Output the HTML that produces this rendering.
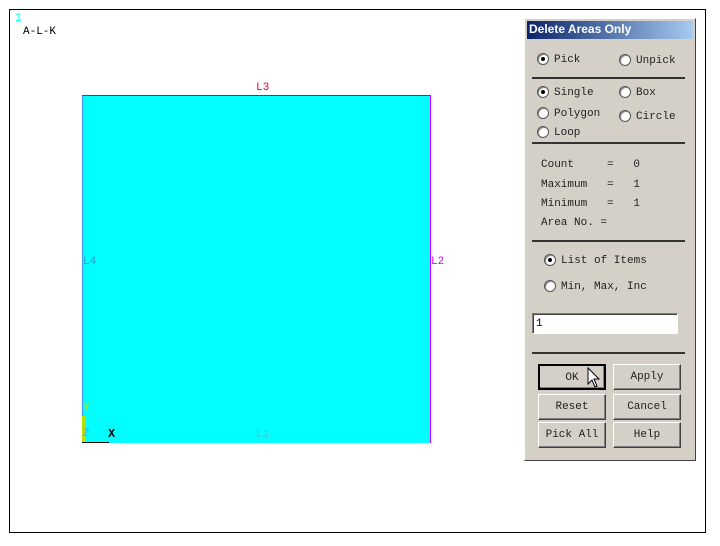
<!DOCTYPE html>
<html><head><style>
body{margin:0;width:720px;height:546px;background:#fff;position:relative;overflow:hidden;font-family:"Liberation Mono",monospace;}
.a{position:absolute;}
.t{font-size:11px;color:#222;}
.r{position:absolute;width:10px;height:10px;border-radius:50%;background:#fff;border:1px solid #555;box-shadow:inset 1px 1px 0 #888;}
.r.on::after{content:"";position:absolute;left:3px;top:3px;width:4px;height:4px;border-radius:50%;background:#000;}
.sep{position:absolute;left:532px;width:153px;height:2px;background:#333;}
.btn{position:absolute;width:68px;height:26px;background:#d4d0c8;border:1px solid;border-color:#fff #404040 #404040 #fff;box-shadow:inset -1px -1px 0 #808080;font-size:11px;text-align:center;line-height:24px;color:#222;box-sizing:border-box;}
</style></head><body>
<div class="a" style="left:9px;top:9px;width:697px;height:524px;border:1px solid #000;box-sizing:border-box"></div>
<div class="a" style="left:15px;top:11px;color:#0ff;font-size:12px">1</div>
<div class="a t" style="left:23px;top:26px;color:#000">A-L-K</div>
<div class="a" style="left:82px;top:96px;width:348px;height:347px;background:#0ff"></div>
<div class="a" style="left:82px;top:95px;width:349px;height:1px;background:#f00"></div>
<div class="a" style="left:430px;top:96px;width:1px;height:347px;background:#c0f"></div>
<div class="a" style="left:82px;top:96px;width:1px;height:347px;background:#39f"></div>
<div class="a" style="left:82px;top:416px;width:3px;height:27px;background:#bd0"></div>
<div class="a" style="left:82px;top:442px;width:27px;height:1px;background:#000"></div>
<div class="a t" style="left:256px;top:82px;color:#e03">L3</div>
<div class="a t" style="left:431px;top:256px;color:#c0f">L2</div>
<div class="a t" style="left:83px;top:256px;color:#39c">L4</div>
<div class="a t" style="left:83px;top:402px;color:#cd0">Y</div>
<div class="a t" style="left:83px;top:428px;color:#4af">Z</div>
<div class="a" style="left:108px;top:427px;font-size:12px;font-weight:bold">X</div>
<div class="a t" style="left:256px;top:429px;color:#3cc">L1</div>

<div class="a" style="left:524px;top:18px;width:172px;height:443px;background:#d4d0c8;border:1px solid;border-color:#fff #404040 #404040 #fff;box-sizing:border-box"></div>
<div class="a" style="left:527px;top:21px;width:166px;height:18px;background:linear-gradient(90deg,#0a246a,#a6caf0)"></div>
<div class="a" style="left:529px;top:22px;color:#fff;font:bold 12px 'Liberation Sans',sans-serif">Delete Areas Only</div>

<div class="r on" style="left:537px;top:53px"></div><div class="a t" style="left:554px;top:54px">Pick</div>
<div class="r" style="left:619px;top:54px"></div><div class="a t" style="left:636px;top:55px">Unpick</div>
<div class="sep" style="top:77px"></div>
<div class="r on" style="left:537px;top:86px"></div><div class="a t" style="left:554px;top:87px">Single</div>
<div class="r" style="left:619px;top:86px"></div><div class="a t" style="left:636px;top:87px">Box</div>
<div class="r" style="left:537px;top:107px"></div><div class="a t" style="left:554px;top:108px">Polygon</div>
<div class="r" style="left:619px;top:110px"></div><div class="a t" style="left:636px;top:111px">Circle</div>
<div class="r" style="left:537px;top:126px"></div><div class="a t" style="left:554px;top:127px">Loop</div>
<div class="sep" style="top:142px"></div>
<div class="a t" style="left:541px;top:159px;white-space:pre">Count     =   0</div>
<div class="a t" style="left:541px;top:179px;white-space:pre">Maximum   =   1</div>
<div class="a t" style="left:541px;top:198px;white-space:pre">Minimum   =   1</div>
<div class="a t" style="left:541px;top:217px;white-space:pre">Area No. =</div>
<div class="sep" style="top:240px"></div>
<div class="r on" style="left:544px;top:254px"></div><div class="a t" style="left:561px;top:255px">List of Items</div>
<div class="r" style="left:544px;top:280px"></div><div class="a t" style="left:561px;top:281px">Min, Max, Inc</div>
<div class="a" style="left:532px;top:313px;width:146px;height:21px;background:#fff;border:1px solid;border-color:#808080 #fff #fff #808080;box-shadow:inset 1px 1px 0 #404040;box-sizing:border-box;font-size:11px;padding:4px 3px">1</div>
<div class="sep" style="top:352px"></div>
<div class="btn" style="left:538px;top:364px;border:2px solid #000">OK</div>
<div class="btn" style="left:613px;top:364px">Apply</div>
<div class="btn" style="left:538px;top:394px">Reset</div>
<div class="btn" style="left:613px;top:394px">Cancel</div>
<div class="btn" style="left:538px;top:422px">Pick All</div>
<div class="btn" style="left:613px;top:422px">Help</div>
<svg class="a" style="left:587px;top:367px" width="14" height="22" viewBox="0 0 14 22"><path d="M1 1 L1 17 L5 13 L8 20 L10 19 L7 12 L12 12 Z" fill="#fff" stroke="#000" stroke-width="1"/></svg>
</body></html>
